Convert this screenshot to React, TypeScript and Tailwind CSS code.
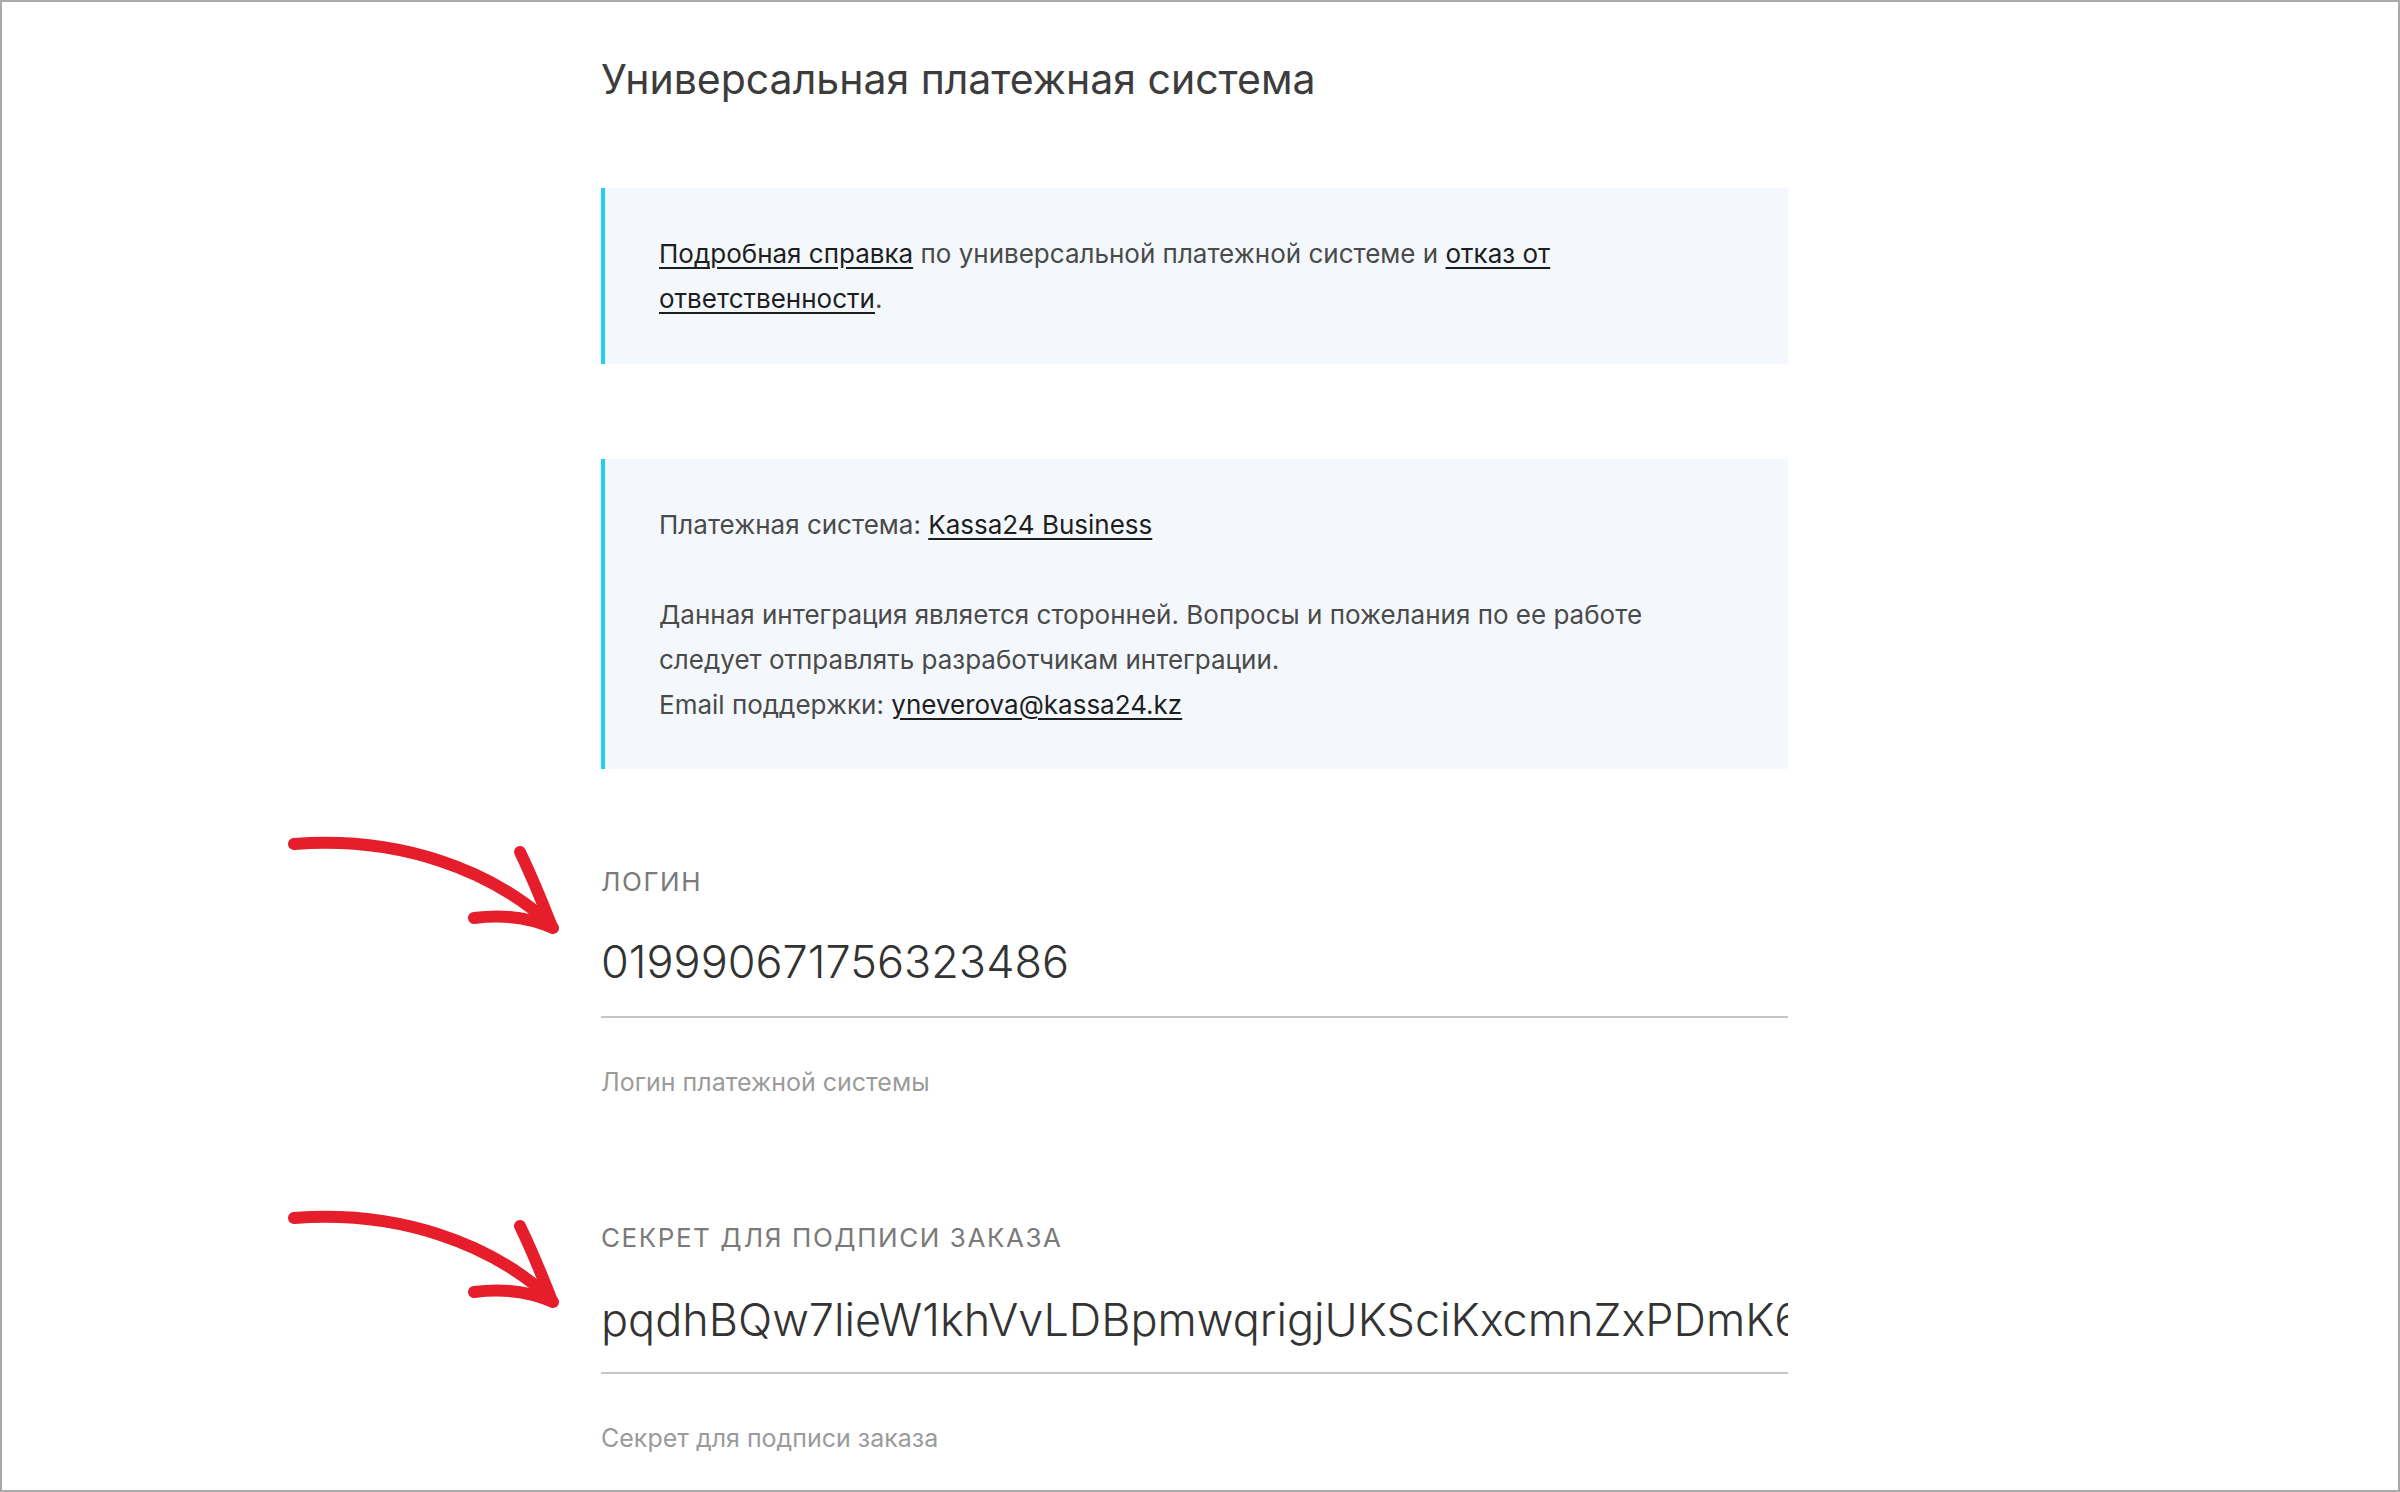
import React from 'react';

const font = { fontFamily: 'Inter, "Noto Sans", sans-serif' };

function Arrow({ className }: { className: string }) {
  return (
    <svg
      className={`pointer-events-none absolute left-[-316px] ${className}`}
      fill="none"
      height="104"
      stroke="#e61e2b"
      strokeLinecap="round"
      strokeLinejoin="round"
      strokeWidth="12"
      viewBox="0 0 280 104"
      width="280"
    >
      <path d="M9 10 C115 2, 205 36, 263 88" />
      <path d="M235 18 C248 45, 258 70, 267 93" />
      <path d="M189 84 C220 80, 248 85, 268 94" />
    </svg>
  );
}

interface FieldProps {
  label: string;
  value: string;
  hint: string;
  arrowClass: string;
  valueClass: string;
}

function Field({ label, value, hint, arrowClass, valueClass }: FieldProps) {
  return (
    <div className="relative">
      <Arrow className={arrowClass} />
      <div className="text-[26px] uppercase leading-[32px] tracking-[0.06em] text-[#7a7a7a]">
        {label}
      </div>
      <div
        className={`${valueClass} overflow-hidden whitespace-nowrap border-b-2 border-[#c6c6c6] font-light text-[45px] leading-[56px] text-[#333]`}
      >
        {value}
      </div>
      <div className="mt-[48px] text-[25px] leading-[32px] text-[#9b9b9b]">
        {hint}
      </div>
    </div>
  );
}

export default function App() {
  return (
    <div
      className="h-[1492px] overflow-hidden border-2 border-[#a9a9a9] bg-white"
      style={font}
    >
      <div className="ml-[599px] w-[1187px] pt-[51px]">
        <h1 className="text-[41px] leading-[53px] text-[#3c3c3c]">
          Универсальная платежная система
        </h1>

        <div className="mt-[82px] border-l-4 border-[#22cfee] bg-[#f4f8fd] px-[54px] py-[43px] text-[26px] leading-[45px] text-[#4a4a4a]">
          <p className="max-w-[1000px]">
            <a className="text-[#1e1e1e] underline underline-offset-4" href="#">
              Подробная справка
            </a>{' '}
            по универсальной платежной системе и{' '}
            <a className="text-[#1e1e1e] underline underline-offset-4" href="#">
              отказ от ответственности
            </a>
            .
          </p>
        </div>

        <div className="mt-[95px] border-l-4 border-[#22cfee] bg-[#f4f8fd] px-[54px] pb-[42px] pt-[43px] text-[26px] leading-[45px] text-[#4a4a4a]">
          <p>
            Платежная система:{' '}
            <a className="text-[#1e1e1e] underline underline-offset-4" href="#">
              Kassa24 Business
            </a>
          </p>
          <p className="mt-[45px] max-w-[1000px]">
            Данная интеграция является сторонней. Вопросы и пожелания по ее работе
            следует отправлять разработчикам интеграции.
            <br />
            Email поддержки:{' '}
            <a className="text-[#1e1e1e] underline underline-offset-4" href="#">
              yneverova@kassa24.kz
            </a>
          </p>
        </div>

        <div className="mt-[97px]">
          <Field
            arrowClass="top-[-32px]"
            hint="Логин платежной системы"
            label="Логин"
            value="019990671756323486"
            valueClass="mt-[36px] pb-[26px]"
          />
        </div>

        <div className="mt-[124px]">
          <Field
            arrowClass="top-[-14px]"
            hint="Секрет для подписи заказа"
            label="Секрет для подписи заказа"
            value="pqdhBQw7lieW1khVvLDBpmwqrigjUKSciKxcmnZxPDmK63z0Qx"
            valueClass="mt-[38px] pb-[24px]"
          />
        </div>
      </div>
    </div>
  );
}
